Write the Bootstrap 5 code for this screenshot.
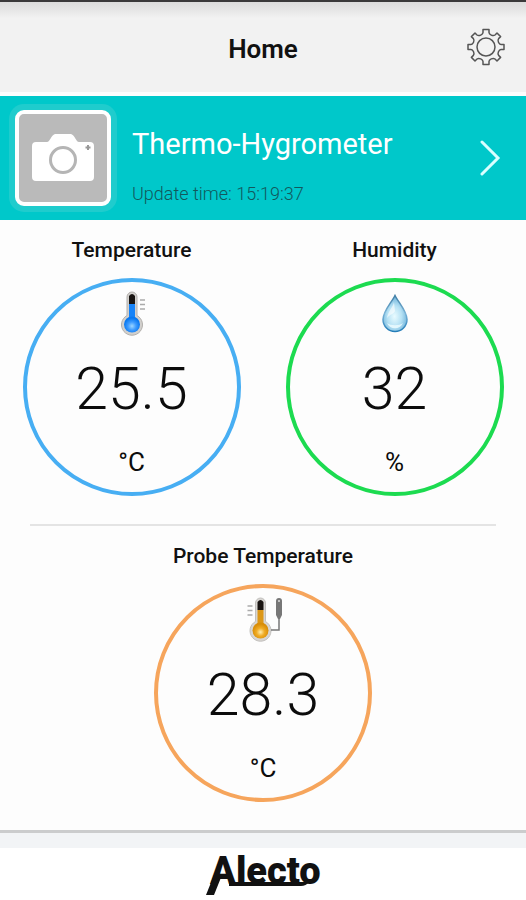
<!DOCTYPE html>
<html lang="en">
<head>
<meta charset="utf-8">
<meta name="viewport" content="width=device-width, initial-scale=1">
<title>Home</title>
<link rel="stylesheet" href="https://cdn.jsdelivr.net/npm/bootstrap@5.3.0/dist/css/bootstrap.min.css">
<style>
body { font-family: Roboto, "Liberation Sans", sans-serif; background: #fdfdfd; color: #111; }
svg { display: block; }
.topbar { height: 92px; padding: 0 20px; border-top: 2px solid #3b3a3b; background: linear-gradient(#dcdcdc, #e6e6e6 8px, #f2f2f2 16px); }
.topbar h1 { font-size: 26px; line-height: 32px; font-weight: 600; }
.side { width: 40px; }
.banner { margin-top: 4px; min-height: 124px; padding: 0 16px 0 15px; background: #00c8ca; }
.thumb { width: 96px; height: 96px; background: #bababa; border: 4px solid #fff; border-radius: 9px; box-shadow: 0 0 0 6px #1fcccd; }
.banner-text { margin-left: 21px; padding-top: 16px; }
.device { font-size: 29px; line-height: 36px; color: #fff; }
.updated { font-size: 18px; line-height: 24px; font-weight: 300; color: #12585c; margin-top: 20px; }
.gauges { padding-top: 18px; }
.gauge-title { font-size: 21px; line-height: 24px; font-weight: 500; margin-bottom: 16px; }
.ring { width: 218px; height: 218px; border: 4px solid; border-radius: 50%; padding-top: 8px; }
.ring-blue { border-color: #47aef3; }
.ring-green { border-color: #1cdb50; }
.ring-orange { border-color: #f6a55c; }
.reading { font-size: 59px; line-height: 72px; font-weight: 300; margin-top: 15px; color: #0c0c0c; }
.unit { font-size: 26px; line-height: 32px; margin-top: 21px; color: #0c0c0c; }
.rule { margin: 28px 30px 0; border-top: 2px solid #e4e4e4; opacity: 1; }
.footer-band { height: 18px; border-top: 3px solid #cbcccd; background: #f2f4f6; }
.brand-bar { height: 52px; background: #fff; }
.logo-type { font-family: Roboto, "Liberation Sans", sans-serif; font-size: 38px; font-weight: 900; }
</style>
<script src="https://cdn.jsdelivr.net/npm/bootstrap@5.3.0/dist/js/bootstrap.bundle.min.js"></script>
</head>
<body class="min-vh-100 d-flex flex-column">
<header class="topbar d-flex align-items-center justify-content-between flex-shrink-0">
  <span class="side"></span>
  <h1 class="m-0 pt-1">Home</h1>
  <button type="button" class="btn p-0 border-0 side" aria-label="Settings">
    <svg width="40" height="40" viewBox="0 0 40 40" fill="none" stroke="#555" stroke-width="1.5" stroke-linejoin="round">
      <path d="M17 2.500h6v3c0 2 4 4 6 2.500l2-2 3.600 3.600-2 2c-1.500 2 .3 5.900 2.400 5.900h3v5h-3c-2.100 0-3.900 3.900-2.400 5.900l2 2-3.600 3.600-2-2c-2-1.500-6 .4-6 2.500v3h-6v-3c0-2.100-4-4-6-2.500l-2 2-3.600-3.600 2-2c1.500-2-.3-5.900-2.400-5.900H2v-5h3c2.100 0 3.900-3.900 2.400-5.900l-2-2L9 6l2 2c2 1.500 6-.5 6-2.500z"/>
      <circle cx="20" cy="20" r="9"/>
    </svg>
  </button>
</header>

<a href="#device" class="banner d-flex align-items-center text-decoration-none flex-shrink-0">
  <span class="thumb d-flex align-items-center justify-content-center flex-shrink-0">
    <svg width="62" height="48" viewBox="0 0 62 48" fill="#fff" aria-hidden="true">
      <path d="M4 8h11c3 0 4-7 8-8h16c4 1 5 8 8 8h11q4 0 4 4v31q0 4-4 4H4q-4 0-4-4V12q0-4 4-4z"/>
      <circle cx="31" cy="26" r="12.500" stroke="#b5b5b5" stroke-width="3"/>
      <path d="M56 11v5M53.500 13.500h5" stroke="#999" stroke-width="2"/>
    </svg>
  </span>
  <span class="banner-text flex-grow-1">
    <span class="device d-block">Thermo-Hygrometer</span>
    <span class="updated d-block">Update time: 15:19:37</span>
  </span>
  <svg class="me-2" width="22" height="38" viewBox="0 0 22 38" fill="none" stroke="#d9ffff" stroke-width="3" stroke-linecap="round" aria-hidden="true"><path d="M2 3l16 16L2 35"/></svg>
</a>

<main class="gauges flex-grow-1">
  <div class="row g-0">
    <section class="col-6 d-flex flex-column align-items-center">
      <h2 class="gauge-title">Temperature</h2>
      <div class="ring ring-blue d-flex flex-column align-items-center">
        <svg width="50" height="48" viewBox="0 0 50 48" aria-hidden="true">
          <defs><radialGradient id="blueBulb" cx=".5" cy=".6"><stop offset="0" stop-color="#9cd6ff"/><stop offset=".5" stop-color="#3f9cff"/><stop offset="1" stop-color="#0878f0"/></radialGradient></defs>
          <path d="M20 7a5 5 0 0 1 10 0v18.500a10.500 10.500 0 1 1-10 0z" fill="#d2d0cd" stroke="#b2afac"/>
          <path d="M22 6q3-4 6 0v8h-6z" fill="#191512"/>
          <path d="M22 14h6v18h-6z" fill="#1683f8"/><circle cx="25" cy="34.500" r="8" fill="url(#blueBulb)"/>
          <path d="M33 10h5M33 14.500h5M33 19h5" stroke="#aaa" stroke-width="1.500"/>
        </svg>
        <div class="reading">25.5</div>
        <div class="unit">°C</div>
      </div>
    </section>
    <section class="col-6 d-flex flex-column align-items-center">
      <h2 class="gauge-title">Humidity</h2>
      <div class="ring ring-green d-flex flex-column align-items-center">
        <svg width="50" height="48" viewBox="0 0 50 48" aria-hidden="true">
          <defs>
            <linearGradient id="dropEdge" x2="0" y2="1"><stop offset="0" stop-color="#3f7da5"/><stop offset=".5" stop-color="#79b2d6"/><stop offset="1" stop-color="#247db8"/></linearGradient>
            <radialGradient id="dropFill" cx=".48" cy=".58" r=".5"><stop offset="0" stop-color="#e9fbff"/><stop offset=".6" stop-color="#b5e1f4"/><stop offset="1" stop-color="#7fbde0"/></radialGradient>
          </defs>
          <path d="M25 5.500C22 12 13 21 13 29.500a12 12 0 0 0 24 0C37 21 28 12 25 5.500z" fill="url(#dropFill)" stroke="url(#dropEdge)" stroke-width="1.500"/>
          <path d="M17 33c3 7 13 7 16 0-4 3-12 3-16 0z" fill="#effcff" opacity=".8"/>
          <path d="M24 12c-1 5-6 9-7 16 3-4 7-4 8-7z" fill="#fff" opacity=".6"/>
        </svg>
        <div class="reading">32</div>
        <div class="unit">%</div>
      </div>
    </section>
  </div>
  <hr class="rule">
  <section class="gauges d-flex flex-column align-items-center pb-4">
    <h2 class="gauge-title">Probe Temperature</h2>
    <div class="ring ring-orange d-flex flex-column align-items-center">
      <svg width="50" height="48" viewBox="0 0 50 48" aria-hidden="true">
        <defs><radialGradient id="amberBulb" cx=".5" cy=".6"><stop offset="0" stop-color="#ffeeb0"/><stop offset=".5" stop-color="#f0ac25"/><stop offset="1" stop-color="#d98e08"/></radialGradient></defs>
        <path d="M17.500 7a5 5 0 0 1 10 0v18.500a10.500 10.500 0 1 1-10 0z" fill="#d8d6d3" stroke="#c2c0bd"/>
        <path d="M19.500 6q3-4 6 0v8h-6z" fill="#191512"/>
        <path d="M19.500 14h6v18h-6z" fill="#dc9717"/><circle cx="22.500" cy="34.500" r="8" fill="url(#amberBulb)"/>
        <path d="M9.500 10h5M9.500 14.500h5M9.500 19h5" stroke="#aaa" stroke-width="1.500"/>
        <path d="M33 34h8V21" fill="none" stroke="#777" stroke-width="1.500"/>
        <path d="M38 5q0-3 3-3t3 3v14l-2 4h-2l-2-4z" fill="#777"/><circle cx="41" cy="5" r="1" fill="#ddd"/>
      </svg>
      <div class="reading">28.3</div>
      <div class="unit">°C</div>
    </div>
  </section>
</main>

<footer class="flex-shrink-0">
  <div class="footer-band"></div>
  <div class="brand-bar d-flex justify-content-center">
    <svg width="116" height="52" viewBox="0 0 116 52" fill="#111" role="img" aria-label="Alecto">
      <text class="logo-type" x="5" y="36">Alecto</text>
      <path d="M9 27h8L9 47H1z"/>
      <path d="M24 34h80q-3 4-8 4H24z"/>
    </svg>
  </div>
</footer>
</body>
</html>
